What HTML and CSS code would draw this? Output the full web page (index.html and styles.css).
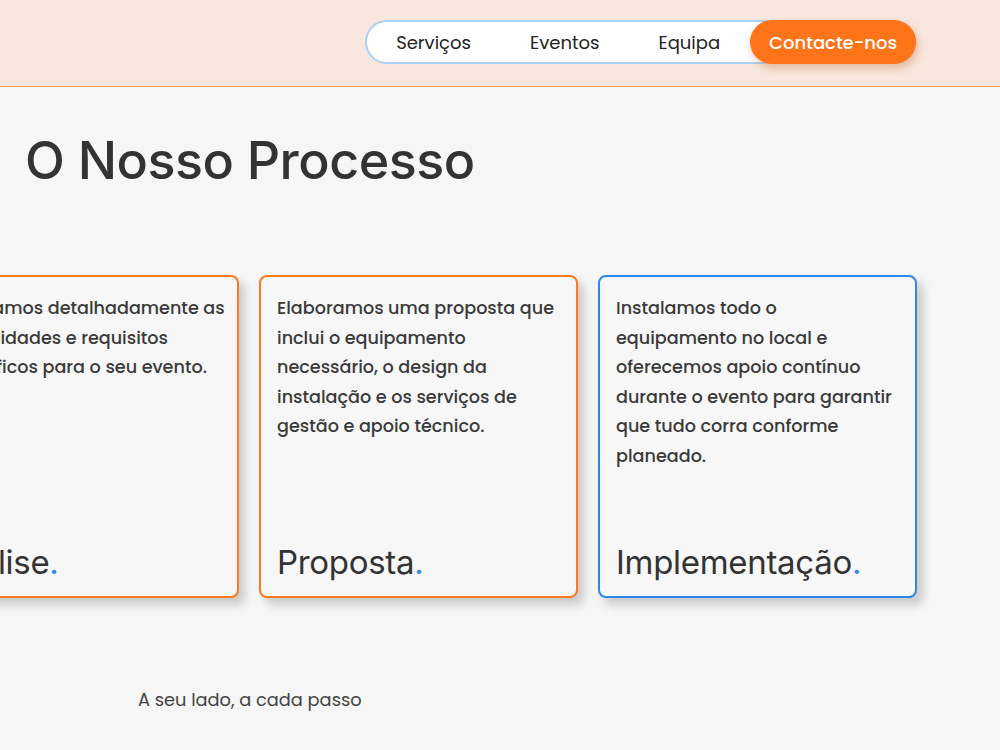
FILE: index.html
```html
<!DOCTYPE html>
<html lang="pt">
<head>
  <meta charset="UTF-8" />
  <meta name="viewport" content="width=device-width, initial-scale=1.0" />
  <title>O Nosso Processo</title>
  <link rel="stylesheet" href="styles.css">
</head>
<body>
  <header class="topbar">
    <nav class="nav">
      <a href="#servicos" class="nav-link">Serviços</a>
      <a href="#eventos" class="nav-link">Eventos</a>
      <a href="#equipa" class="nav-link nav-link-last">Equipa</a>
      <a href="#contacto" class="nav-cta">Contacte-nos</a>
    </nav>
  </header>

  <section class="process">
    <h1 class="process-title">O Nosso Processo</h1>

    <div class="carousel">
      <div class="track">
        <div class="card">
          <p class="card-text card-text-wide">Analisamos detalhadamente as necessidades e requisitos específicos para o seu evento.</p>
          <h3 class="card-title">Análise<span class="dot">.</span></h3>
        </div>
        <div class="card">
          <p class="card-text">Elaboramos uma proposta que inclui o equipamento necessário, o design da instalação e os serviços de gestão e apoio técnico.</p>
          <h3 class="card-title">Proposta<span class="dot">.</span></h3>
        </div>
        <div class="card card-active">
          <p class="card-text">Instalamos todo o equipamento no local e oferecemos apoio contínuo durante o evento para garantir que tudo corra conforme planeado.</p>
          <h3 class="card-title">Implementação<span class="dot">.</span></h3>
        </div>
      </div>
    </div>

    <p class="tagline">A seu lado, a cada passo</p>
  </section>
</body>
</html>
```

FILE: styles.css
```css
body {
  margin: 0;
  font-family: Poppins, "Open Sans", Arial, sans-serif;
  background-color: #f6f6f6;
  color: #333;
  overflow: hidden;
}
.topbar {
  height: 86px;
  background-color: #f7e7de;
  border-bottom: 1px solid #f59a5a;
  display: flex;
  justify-content: flex-end;
  align-items: center;
  padding-right: 84px;
}
.nav {
  display: flex;
  align-items: center;
  background: #fff;
  border: 2px solid #a9d1f5;
  border-radius: 24px;
  height: 40px;
  padding-left: 29px;
  margin-top: -2px;
}
.nav-link {
  font-size: 18px;
  color: #222;
  text-decoration: none;
  margin-right: 59px;
}
.nav-link-last {
  margin-right: 30px;
}
.nav-cta {
  display: flex;
  align-items: center;
  height: 44px;
  margin: -2px -2px -2px 0;
  padding: 0 19px;
  background: #ff7418;
  color: #fff;
  font-size: 18px;
  font-weight: 500;
  text-decoration: none;
  border-radius: 24px;
  box-shadow: 2px 4px 8px rgba(200, 90, 20, 0.35);
}
.process {
  padding: 0 0 0 25px;
}
.process-title {
  margin: 42px 0 0;
  font-family: Inter, "Open Sans", sans-serif;
  font-size: 52px;
  font-weight: 500;
  letter-spacing: -0.5px;
  color: #333;
}
.carousel {
  margin: 83px 0 0 -25px;
}
.track {
  display: flex;
  gap: 20px;
  margin-left: -80px;
}
.card {
  flex: 0 0 319px;
  height: 323px;
  box-sizing: border-box;
  padding: 17px 16px 14px 16px;
  border: 2px solid #ff7a1f;
  border-radius: 8px;
  background: #f7f7f7;
  box-shadow: 6px 7px 10px rgba(0, 0, 0, 0.18);
  display: flex;
  flex-direction: column;
  justify-content: space-between;
}
.card-active {
  border-color: #2b8ae6;
}
.card-text {
  margin: 0;
  font-size: 17.6px;
  font-weight: 500;
  line-height: 29.5px;
  color: #3a3a3a;
}
/* first card text runs a little closer to the edge */
.card-text-wide {
  margin-right: -8px;
}
.card-title {
  margin: 0;
  font-family: Inter, "Open Sans", sans-serif;
  font-size: 33px;
  font-weight: 400;
  letter-spacing: -0.3px;
  color: #333;
}
.dot {
  color: #2b8ae6;
}
.tagline {
  margin: 88px 0 0 113px;
  font-size: 17.8px;
  color: #444;
}
```
